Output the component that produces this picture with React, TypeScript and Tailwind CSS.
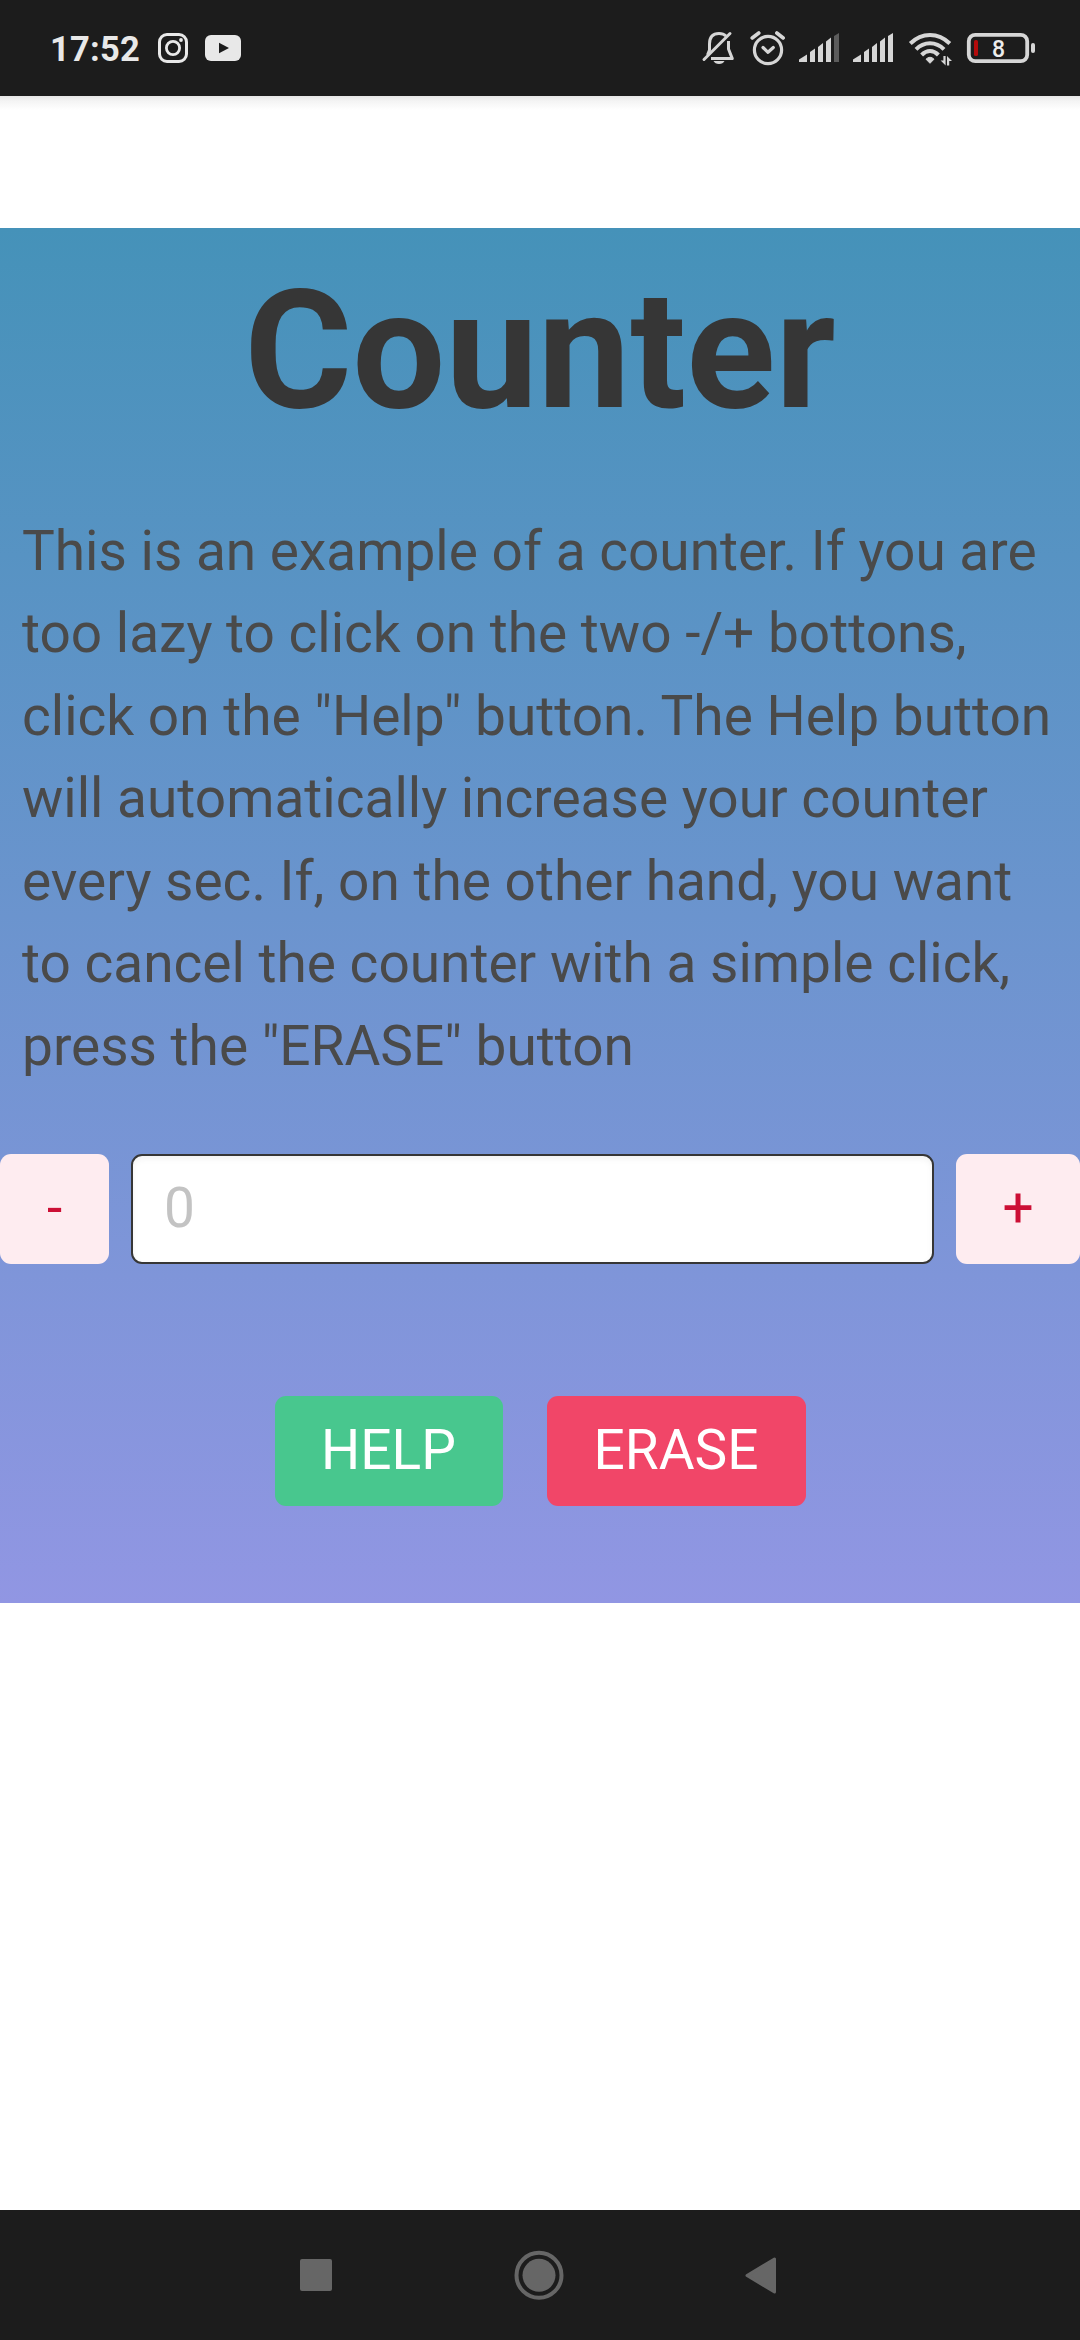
import React from "react";

const INK = "#d6d6d6";

function StatusIcons() {
  return (
    <svg width="350" height="80" viewBox="690 8 350 80" fill="none" className="shrink-0">
      {/* muted bell */}
      <g stroke={INK} strokeWidth="3">
        <path d="M709.5 49V44C709.5 37 713 33.5 719 33.5C722 33.5 724 34 726 36" />
        <path d="M728.5 41V49L732.3 58.6H711" strokeLinejoin="round" />
        <path d="M709.5 44V50L707.5 55" />
        <path d="M704 59.5L730 33.5" strokeLinecap="round" />
      </g>
      <path d="M713.5 61H724.5Q723 64 719 64T713.5 61Z" fill={INK} />
      {/* alarm */}
      <g stroke={INK} strokeWidth="3.2" strokeLinecap="round" strokeLinejoin="round">
        <circle cx="768" cy="50" r="13.6" />
        <path d="M763 47.5L768 52.3L773.3 47.5" />
        <path d="M752.2 38L758.8 33M783.2 38L776.8 33" strokeWidth="3.6" />
      </g>
      {/* signal bars */}
      <g fill={INK}>
        <path d="M799 62V59.5L807 54.5V62Z" />
        <path d="M810 62V52L815 48.5V62Z" />
        <path d="M818 62V47L823 43V62Z" />
        <path d="M826 62V41.5L831 37.5V62Z" />
        <path d="M834 62V36L839 33V62Z" fill="#5c5c5c" />
        <path d="M853 62V59.5L861 54.5V62Z" />
        <path d="M864 62V52L869 48.5V62Z" />
        <path d="M872 62V47L877 43V62Z" />
        <path d="M880 62V41.5L885 37.5V62Z" />
        <path d="M888 62V36L893 33V62Z" />
      </g>
      {/* wifi */}
      <g stroke={INK} strokeWidth="4">
        <path d="M910.3 43.5Q919 35 930 35T949.8 43.5" />
        <path d="M916 49.3Q922 43.2 930 43.2T944 49.3" />
        <path d="M921.6 55Q925.5 51 930 51T938.4 55" />
      </g>
      <path d="M926 59.2Q930 55.3 934 59.2L930 63.3Z" fill={INK} stroke={INK} strokeLinejoin="round" />
      <path d="M943.4 56H945.6V65.5L940.6 60.5H943.4ZM949.2 65.5H947V56L952 61H949.2Z" fill={INK} />
      {/* battery */}
      <rect x="968.8" y="34.8" width="58.4" height="26.4" rx="6.5" stroke={INK} strokeWidth="3.8" />
      <rect x="1031" y="43" width="4" height="10" rx="2" fill={INK} />
      <rect x="974" y="40" width="4" height="16" rx="1.6" fill="#b30b0b" />
      <text x="998.5" y="57" textAnchor="middle" fontSize="23" fontWeight="500" fontFamily="Roboto" fill="#ececec">8</text>
    </svg>
  );
}

function AppIcons() {
  return (
    <svg width="90" height="34" viewBox="155 31 90 34" fill="none" className="ml-[16px] shrink-0">
      <rect x="159.5" y="34.5" width="27" height="27" rx="7.5" stroke="#e8e8e8" strokeWidth="3" />
      <circle cx="173" cy="48" r="6.6" stroke="#e8e8e8" strokeWidth="2.8" />
      <circle cx="181" cy="40" r="1.9" fill="#e8e8e8" />
      <rect x="205" y="35" width="36" height="26" rx="6" fill="#e8e8e8" />
      <path d="M219 42.7V53.3L229 48Z" fill="#1c1c1c" />
    </svg>
  );
}

export default function App() {
  return (
    <div className="flex h-[2340px] w-[1080px] flex-col overflow-hidden bg-white font-['Roboto',sans-serif]">
      <header className="flex h-24 shrink-0 items-center justify-between bg-[#1c1c1c] pr-10 pl-[50px]">
        <div className="flex items-center">
          <span className="mt-[2px] w-[89px] text-[34.5px] leading-[40px] font-bold tracking-[0.2px] whitespace-nowrap text-[#e8e8e8]">17:52</span>
          <AppIcons />
        </div>
        <div className="flex h-20 items-center">
          <StatusIcons />
        </div>
      </header>
      <div className="h-[132px] shrink-0 bg-[linear-gradient(to_bottom,#e6e6e6_0,#f4f4f4_5px,#ffffff_14px)]" />

      <main className="flex h-[1375px] shrink-0 flex-col bg-[linear-gradient(to_bottom,#4592b9,#9196e3)]">
        <h1 className="mt-[26px] text-center text-[165px] leading-[193px] font-bold text-[#363636]">Counter</h1>
        <p className="mt-[62.7px] h-[578.3px] px-[22px] text-[55px] leading-[82.5px] text-[#4a4a4a]">
          This is an example of a counter. If you are too lazy to click on the two -/+ bottons, click on the "Help"
          button. The Help button will automatically increase your counter every sec. If, on the other hand, you want
          to cancel the counter with a simple click, press the "ERASE" button
        </p>
        <div className="mt-[66px] flex h-[110px] gap-[22px] text-[55px]">
          <button className="w-[109px] rounded-[11px] bg-[#feecf0] pb-[2px] text-[#cc0f35]">-</button>
          <input
            placeholder="0"
            className="min-w-0 flex-1 rounded-[11px] border-2 border-[#363636] bg-white px-[31px] pb-[2px] shadow-[inset_0_3px_6px_rgba(10,10,10,0.05)] outline-none placeholder:text-[#c3c3c3]"
          />
          <button className="w-[124px] rounded-[11px] bg-[#feecf0] pb-[2px] text-[#cc0f35]">+</button>
        </div>
        <div className="mt-[132px] flex h-[110px] justify-center gap-[44px] text-[55px] text-white">
          <button className="w-[228px] rounded-[11px] bg-[#48c78e] pb-[2px]">HELP</button>
          <button className="w-[259px] rounded-[11px] bg-[#f14668] pb-[2px]">ERASE</button>
        </div>
      </main>

      <div className="flex-1" />
      <nav className="flex h-[130px] shrink-0 items-center justify-between bg-[#1c1c1c] pr-[302px] pl-[300px]">
        <span className="h-8 w-8 rounded-[2px] bg-[#666666]" />
        <svg width="50" height="50" viewBox="0 0 50 50" className="ml-[2px]">
          <circle cx="25" cy="25.3" r="22.5" fill="none" stroke="#666666" strokeWidth="4" />
          <circle cx="25" cy="25.3" r="16.5" fill="#666666" />
        </svg>
        <svg width="34" height="40" viewBox="0 0 34 40">
          <path d="M3 20.5L30.5 4V37Z" fill="#666666" stroke="#666666" strokeWidth="3" strokeLinejoin="round" />
        </svg>
      </nav>
    </div>
  );
}
